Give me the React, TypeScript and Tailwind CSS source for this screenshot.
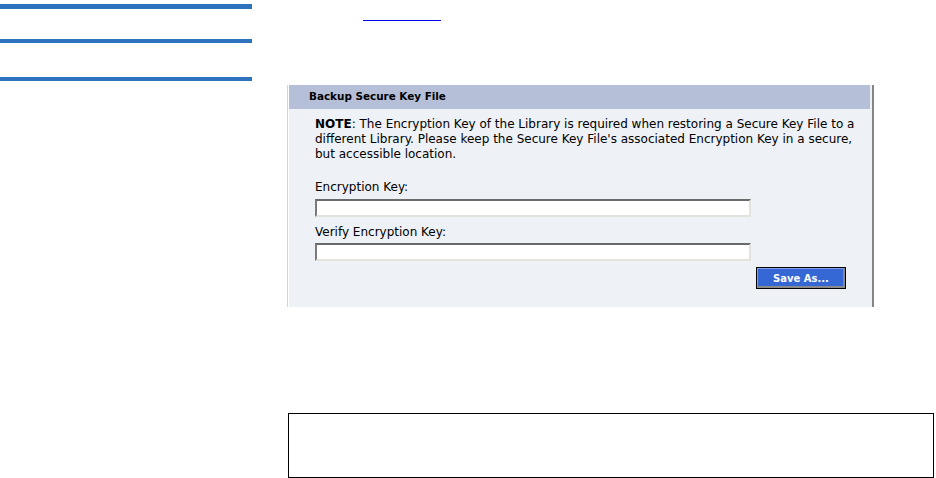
export default function App() {
  return (
    <div className="flex h-[478px] w-[936px] overflow-hidden bg-white font-['DejaVu_Sans',Verdana,sans-serif] text-black">
      {/* left rule column */}
      <div className="w-[287px] shrink-0">
        <div className="mt-[4px] h-[5px] w-[252px] bg-[#2f73bf]" />
        <div className="mt-[30px] h-[4px] w-[252px] bg-[#2f73bf]" />
        <div className="mt-[34px] h-[4px] w-[252px] bg-[#2f73bf]" />
      </div>

      <div className="flex flex-col">
        <div className="ml-[76px] mt-[20px] h-px w-[78px] bg-[#0000ee]" />

        {/* backup panel */}
        <div className="mt-[64px] flex h-[222px] w-[587px] border-l border-r-2 border-l-[#d4d4d4] border-r-[#848484] bg-white pl-px">
          <div className="flex flex-1 flex-col bg-[#eef1f6] pr-[2px]">
            <div className="flex h-[24px] items-center bg-[#b5bfd8] pl-[20px] text-[10.4px] font-bold">
              Backup Secure Key File
            </div>
            <div className="flex w-[559px] flex-col pl-[26px] text-[12px] leading-[15px]">
              <p className="mt-[8px] whitespace-nowrap">
                <span className="font-bold">NOTE</span>: The Encryption Key of the Library is required when restoring a Secure Key File to a
                <br />
                different Library. Please keep the Secure Key File's associated Encryption Key in a secure,
                <br />
                but accessible location.
              </p>
              <label className="mt-[18px]">Encryption Key:</label>
              <div className="mt-[4px] h-[18px] w-[436px] border-2 border-b-[#e4e2dc] border-l-[#7a7a7a] border-r-[#e4e2dc] border-t-[#6a6a6a] bg-white" />
              <label className="mt-[8px]">Verify Encryption Key:</label>
              <div className="mt-[3px] h-[18px] w-[436px] border-2 border-b-[#e4e2dc] border-l-[#7a7a7a] border-r-[#e4e2dc] border-t-[#6a6a6a] bg-white" />
              <div className="mt-[6px] flex w-[531px] justify-end">
                <button className="h-[22px] w-[90px] border border-black bg-[#3568d4] text-[10px] font-bold text-white shadow-[inset_-2px_-2px_0_#8a8a8a,inset_1px_1px_0_#7fa0e8]">
                  Save As...
                </button>
              </div>
            </div>
          </div>
        </div>

        {/* empty bordered box */}
        <div className="ml-px mt-[106px] h-[65px] w-[646px] border border-black" />
      </div>
    </div>
  );
}
